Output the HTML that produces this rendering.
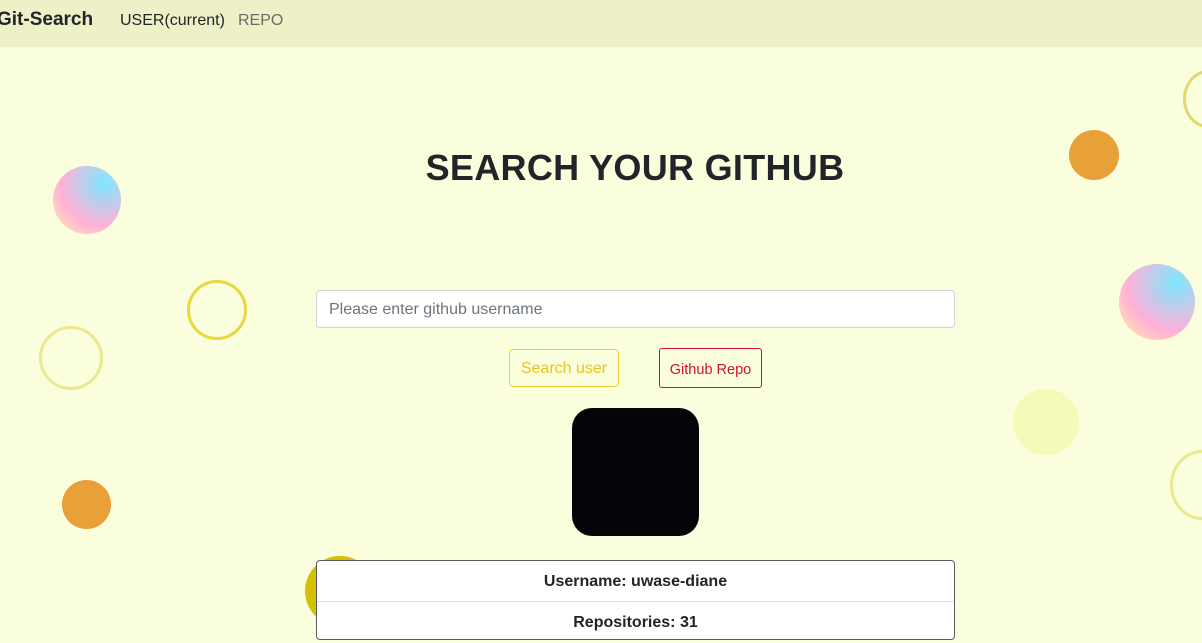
<!DOCTYPE html>
<html><head><meta charset="utf-8"><style>
*{box-sizing:border-box;margin:0;padding:0}
body{width:1202px;height:625px;overflow:hidden;background:#fafedc;font-family:"Liberation Sans",sans-serif;color:#212529;position:relative}
nav{height:47px;background:#eef0c8;position:relative}
.brand{position:absolute;left:-3px;top:9px;font-size:19px;font-weight:bold}
.n1{position:absolute;left:120px;top:12px;font-size:16px}
.n2{position:absolute;left:238px;top:12px;font-size:16px;color:#6c6c6c}
h1{position:absolute;top:147px;left:0;width:1270px;text-align:center;font-size:36px;font-weight:bold;letter-spacing:0.3px}
.inp{position:absolute;left:316px;top:290px;width:639px;height:38px;background:#fff;border:1px solid #ced4da;border-radius:4px;padding:10px 12px;font-size:16px;color:#6c757d}
.b1{position:absolute;left:509px;top:349px;width:110px;height:38px;border:1px solid #f0d030;border-radius:4px;color:#e8c51c;font-size:16px;text-align:center;line-height:38px}
.b2{position:absolute;left:659px;top:348px;width:103px;height:40px;border:1px solid #d0103a;border-radius:3px;color:#d0103a;font-size:14.5px;text-align:center;line-height:42px}
.av{position:absolute;left:572px;top:408px;width:127px;height:128px;background:#050208;border-radius:20px}
.card{position:absolute;left:316px;top:560px;width:639px;height:80px;background:#fff;border:1px solid #555c66;border-radius:4px}
.row{height:41px;border-bottom:1px solid #ddd;text-align:center;font-weight:bold;font-size:16px;line-height:41px}
.c{position:absolute;border-radius:50%}
</style></head><body>
<nav><div class="brand">Git-Search</div><div class="n1">USER(current)</div><div class="n2">REPO</div></nav>
<div class="c" style="left:53px;top:166px;width:68px;height:68px;background:radial-gradient(circle at 75% 25%,#7ee8ff,#ffb0d8 60%,#fff6a0)"></div>
<div class="c" style="left:1119px;top:264px;width:76px;height:76px;background:radial-gradient(circle at 75% 25%,#7ee8ff,#ffb0d8 60%,#fff6a0)"></div>
<div class="c" style="left:187px;top:280px;width:60px;height:60px;border:3px solid #e8d840"></div>
<div class="c" style="left:39px;top:326px;width:64px;height:64px;border:3px solid #ece890"></div>
<div class="c" style="left:1183px;top:70px;width:50px;height:58px;border:3px solid #e0d870"></div>
<div class="c" style="left:1170px;top:450px;width:64px;height:70px;border:3px solid #ece890"></div>
<div class="c" style="left:1069px;top:130px;width:50px;height:50px;background:#e8a038"></div>
<div class="c" style="left:62px;top:480px;width:49px;height:49px;background:#e8a038"></div>
<div class="c" style="left:1013px;top:389px;width:66px;height:66px;background:#f4fab8"></div>
<div class="c" style="left:305px;top:556px;width:70px;height:70px;background:#d4c000"></div>
<h1>SEARCH YOUR GITHUB</h1>
<div class="inp">Please enter github username</div>
<div class="b1">Search user</div>
<div class="b2">Github Repo</div>
<div class="av"></div>
<div class="card"><div class="row">Username: uwase-diane</div><div class="row" style="border:0">Repositories: 31</div></div>
</body></html>
